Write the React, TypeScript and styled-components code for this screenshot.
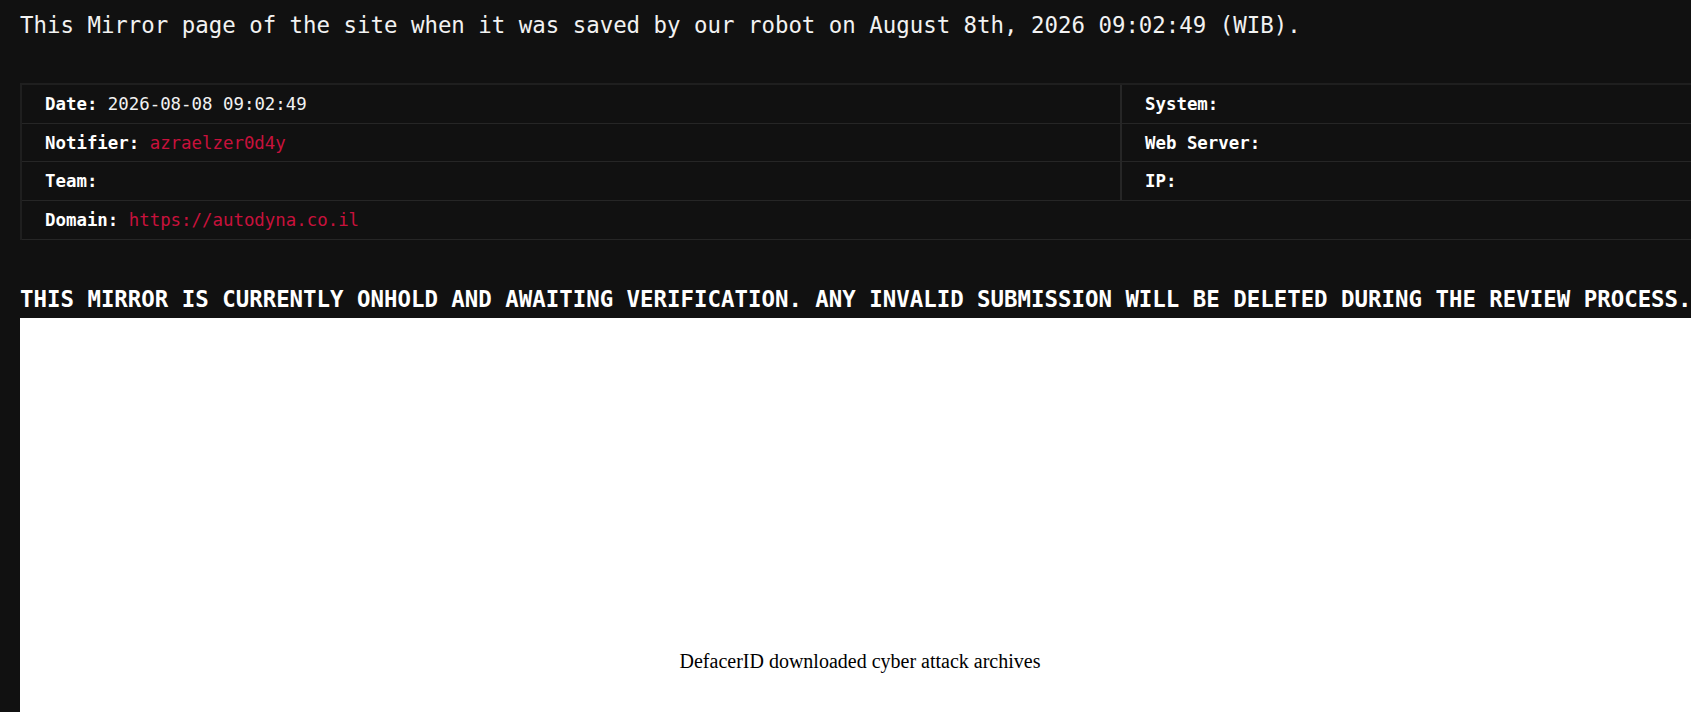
import React from "react";
import styled, { createGlobalStyle } from "styled-components";

const GlobalStyle = createGlobalStyle`
  html, body {
    margin: 0;
    padding: 0;
    background: #111111;
    overflow: hidden;
  }
`;

const Page = styled.div`
  width: 100vw;
  height: 100vh;
  overflow: hidden;
  box-sizing: border-box;
  padding: 10px 0 0 20px;
  background: #111111;
  color: #f2f2f2;
  font-family: "DejaVu Sans Mono", "Liberation Mono", monospace;
`;

const Intro = styled.p`
  margin: 0;
  font-size: 22.4px;
  line-height: 30px;
  white-space: nowrap;
  color: #f2f2f2;
`;

const InfoTable = styled.div`
  margin-top: 43px;
  width: 1900px;
  display: grid;
  grid-template-columns: 1100px 1fr;
  border-top: 2px solid #1f1f1f;
  border-left: 2px solid #1f1f1f;
  font-size: 17.4px;
`;

const Cell = styled.div<{ $left?: boolean; $wide?: boolean }>`
  box-sizing: border-box;
  height: 38.7px;
  display: flex;
  align-items: center;
  padding: 0 22px 0 23px;
  border-bottom: 1px solid #262626;
  border-right: ${(p) => (p.$left ? "2px solid #262626" : "none")};
  grid-column: ${(p) => (p.$wide ? "1 / span 2" : "auto")};
  white-space: nowrap;
`;

const Label = styled.span`
  font-weight: bold;
  color: #ffffff;
  margin-right: 0.6em;
`;

const Value = styled.span<{ $accent?: boolean }>`
  color: ${(p) => (p.$accent ? "#c8113c" : "#f2f2f2")};
`;

const Notice = styled.h2`
  margin: 44px 0 0 0;
  font-size: 22.4px;
  line-height: 30px;
  font-weight: bold;
  white-space: nowrap;
  color: #ffffff;
`;

const MirrorFrame = styled.div`
  margin-top: 4px;
  width: 1680px;
  height: 700px;
  box-sizing: border-box;
  background: #ffffff;
  padding-top: 332px;
  text-align: center;
  color: #000000;
  font-family: "Liberation Serif", "Times New Roman", serif;
  font-size: 20px;
`;

const rows: Array<[
  { label: string; value?: string; accent?: boolean },
  { label: string; value?: string } | null
]> = [
  [{ label: "Date:", value: "2026-08-08 09:02:49" }, { label: "System:" }],
  [{ label: "Notifier:", value: "azraelzer0d4y", accent: true }, { label: "Web Server:" }],
  [{ label: "Team:" }, { label: "IP:" }],
  [{ label: "Domain:", value: "https://autodyna.co.il", accent: true }, null],
];

export default function App() {
  return (
    <>
      <GlobalStyle />
      <Page>
        <Intro>
          This Mirror page of the site when it was saved by our robot on August 8th, 2026 09:02:49 (WIB).
        </Intro>
        <InfoTable>
          {rows.map(([left, right], i) => (
            <React.Fragment key={i}>
              <Cell $left={!!right} $wide={!right}>
                <Label>{left.label}</Label>
                {left.value && <Value $accent={left.accent}>{left.value}</Value>}
              </Cell>
              {right && (
                <Cell>
                  <Label>{right.label}</Label>
                  {right.value && <Value>{right.value}</Value>}
                </Cell>
              )}
            </React.Fragment>
          ))}
        </InfoTable>
        <Notice>
          THIS MIRROR IS CURRENTLY ONHOLD AND AWAITING VERIFICATION. ANY INVALID SUBMISSION WILL BE DELETED DURING THE REVIEW PROCESS.
        </Notice>
        <MirrorFrame>DefacerID downloaded cyber attack archives</MirrorFrame>
      </Page>
    </>
  );
}
